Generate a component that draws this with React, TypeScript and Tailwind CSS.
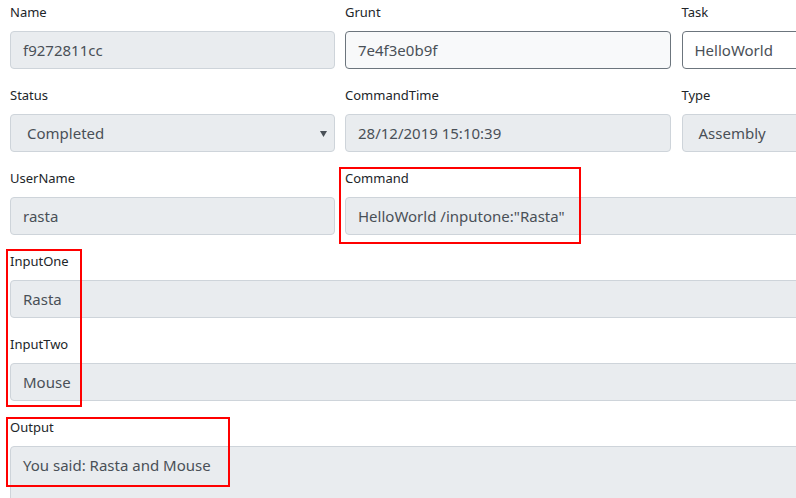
import React from "react";

const font = { fontFamily: '"Segoe UI", "Noto Sans", "Liberation Sans", sans-serif' };

function Label({ children }: { children: React.ReactNode }) {
  return <label className="block text-[13px] leading-[21px] mb-2 text-[#212529]">{children}</label>;
}

function Field({
  label,
  value,
  variant = "disabled",
  select = false,
  arrow = false,
}: {
  label: string;
  value: string;
  variant?: "disabled" | "light" | "white";
  select?: boolean;
  arrow?: boolean;
}) {
  const cls =
    variant === "disabled"
      ? "bg-[#e9ecef] border-[#ced4da]"
      : variant === "light"
      ? "bg-[#f8f9fa] border-[#6c757d]"
      : "bg-white border-[#6c757d]";
  return (
    <div className="mb-4">
      <Label>{label}</Label>
      <div
        className={`relative h-[38px] border rounded-[4px] ${cls} ${select ? "pl-4" : "pl-3"} pr-3 flex items-center text-[15px] leading-6 text-[#495057] whitespace-nowrap overflow-hidden`}
      >
        {value}
        {arrow && (
          <svg className="absolute right-[7px] top-[16px]" width="7" height="6" viewBox="0 0 7 6">
            <path d="M0 0 H7 L3.5 6 Z" fill="#495057" />
          </svg>
        )}
      </div>
    </div>
  );
}

export default function App() {
  return (
    <div className="relative w-[796px] h-[498px] overflow-hidden bg-white" style={font}>
      <div className="w-[1007px] pl-[10px] pt-[2px]">
        <div className="grid grid-cols-[324.5px_326px_326px] gap-x-[10.5px]">
          <Field label="Name" value="f9272811cc" />
          <Field label="Grunt" value="7e4f3e0b9f" variant="light" />
          <Field label="Task" value="HelloWorld" variant="white" />
          <Field label="Status" value="Completed" select arrow />
          <Field label="CommandTime" value="28/12/2019 15:10:39" />
          <Field label="Type" value="Assembly" select />
          <Field label="UserName" value="rasta" />
          <div className="col-span-2">
            <Field label="Command" value={'HelloWorld /inputone:"Rasta"'} />
          </div>
        </div>
        <Field label="InputOne" value="Rasta" />
        <Field label="InputTwo" value="Mouse" />
        <div>
          <Label>Output</Label>
          <div className="h-[86px] border rounded-[4px] bg-[#e9ecef] border-[#ced4da] px-3 pt-[6px] text-[15px] leading-6 text-[#495057]">
            You said: Rasta and Mouse
          </div>
        </div>
      </div>
      <div className="absolute left-[339px] top-[167px] w-[242px] h-[77px] border-2 border-[#ff0000]" />
      <div className="absolute left-[6px] top-[249px] w-[76px] h-[158px] border-2 border-[#ff0000]" />
      <div className="absolute left-[6px] top-[417px] w-[224px] h-[70px] border-2 border-[#ff0000]" />
    </div>
  );
}
